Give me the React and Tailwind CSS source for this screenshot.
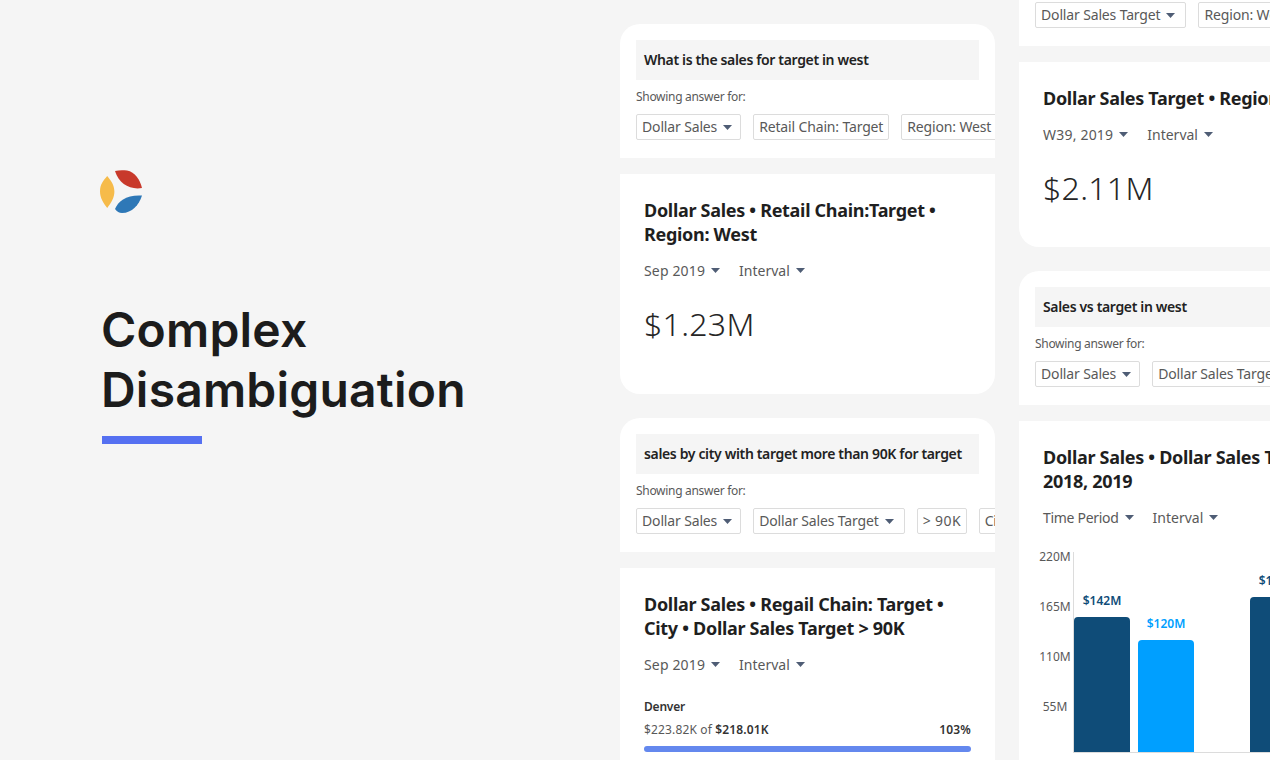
const Caret = ({ className = "ml-[6px]" }) => (
  <svg width="9" height="5" viewBox="0 0 9 5" className={`${className} shrink-0`}>
    <path d="M0 0H9L4.5 5Z" fill="#4f5d75" />
  </svg>
);

const Chip = ({ children, caret, className = "" }) => (
  <div className={`flex h-[26px] shrink-0 items-center rounded-[2px] border border-[#dcdcdc] bg-white px-[5px] text-[14px] leading-none tracking-[-0.15px] whitespace-nowrap text-[#595959] ${className}`}>
    {children}
    {caret && <Caret className="ml-[6px] mr-[3px]" />}
  </div>
);

const Question = ({ text, chips }) => (
  <section className="h-[134px] shrink-0 rounded-t-[20px] bg-white pt-4 pl-4 overflow-hidden">
    <div className="mr-4 flex h-10 items-center bg-[#f5f5f5] px-2 pb-[2px] text-[14px] font-semibold tracking-[-0.35px] whitespace-nowrap text-[#222]">{text}</div>
    <p className="mt-[10px] text-[12px] leading-[14px] tracking-[-0.3px] text-[#595959]">Showing answer for:</p>
    <div className="mt-[10px] flex gap-3">
      {chips.map(([label, caret, cls]) => (
        <Chip key={label} caret={caret} className={cls}>{label}</Chip>
      ))}
    </div>
  </section>
);

const Title = ({ lines }) => (
  <h2 className="text-[18px] leading-6 font-bold tracking-[-0.3px] text-[#1f1f1f]">
    {lines.map((l) => (
      <div key={l} className="whitespace-nowrap">{l}</div>
    ))}
  </h2>
);

const Filters = ({ items }) => (
  <div className="mt-[14px] flex h-5 items-center gap-[19px] text-[14px] text-[#595959]">
    {items.map(([t, cls]) => (
      <div key={t} className="flex items-center whitespace-nowrap">
        <span className={cls}>{t}</span>
        <Caret />
      </div>
    ))}
  </div>
);

const Metric = ({ value }) => (
  <p className="mt-[24px] text-[32px] leading-10 font-light tracking-[0.3px] text-[#262626]">{value}</p>
);

const Answer = ({ children, className }) => (
  <section className={`mt-4 shrink-0 rounded-b-[20px] bg-white px-6 pt-6 ${className}`}>{children}</section>
);

const Bar = ({ label, color, h, text }) => (
  <div className="relative w-14 shrink-0 rounded-t-[4px]" style={{ height: h, background: color }}>
    <span className={`absolute -top-[24px] left-0 w-full text-center text-[12px] leading-4 font-semibold ${text}`}>{label}</span>
  </div>
);

const Logo = () => (
  <svg width="44" height="44" viewBox="0 0 44 44" className="-ml-[1px] block">
    <path d="M7.2 6C3.4 10.5 0 14 0 21.5C0 28 3.4 33 7.2 38C11 33 14.4 28 14.4 21.5C14.4 15 11 10.5 7.2 6Z" fill="#f6bb4a" />
    <path d="M15 1C19 0 23 0 27 0.5C35 2 40 10 42 18C30 20 19 14 15 1Z" fill="#c8392b" />
    <path d="M42 25.5C39 35 32 43 22 43C19 43 17 41.5 15 39C18 31 27 24.5 42 25.5Z" fill="#2e78b7" />
  </svg>
);

export default function App() {
  return (
    <div
      className="flex h-[760px] w-[1270px] overflow-hidden bg-[#f5f5f5] text-[#222]"
      style={{ fontFamily: '"Noto Sans", Arial, sans-serif' }}
    >
      <aside className="w-[620px] shrink-0 pt-[170px] pl-[101px]">
        <Logo />
        <h1 className="mt-[86px] text-[48px] leading-[60px] font-semibold tracking-[0.2px] text-[#1c1c1c]" style={{ fontFamily: 'Inter, sans-serif' }}>
          Complex
          <br />
          Disambiguation
        </h1>
        <div className="mt-[16px] ml-px h-2 w-[100px] bg-[#5570f1]" />
      </aside>

      <main className="flex w-[375px] shrink-0 flex-col pt-6">
        <Question
          text="What is the sales for target in west"
          chips={[["Dollar Sales", true], ["Retail Chain: Target"], ["Region: West"]]}
        />
        <Answer className="h-[220px]">
          <Title lines={["Dollar Sales • Retail Chain:Target •", "Region: West"]} />
          <Filters items={[["Sep 2019", "tracking-[0.15px]"], ["Interval"]]} />
          <Metric value="$1.23M" />
        </Answer>
        <div className="h-6 shrink-0" />
        <Question
          text="sales by city with target more than 90K for target"
          chips={[["Dollar Sales", true], ["Dollar Sales Target", true, "pr-[7px]"], ["> 90K", false, "w-[50px] tracking-[0.4px]"], ["City"]]}
        />
        <Answer className="h-[220px]">
          <Title lines={["Dollar Sales • Regail Chain: Target •", "City • Dollar Sales Target > 90K"]} />
          <Filters items={[["Sep 2019", "tracking-[0.15px]"], ["Interval"]]} />
          <p className="mt-[25px] text-[12px] leading-4 font-semibold tracking-[-0.2px] text-[#333]">Denver</p>
          <div className="mt-[7px] flex justify-between text-[12px] leading-4 tracking-[0.15px] text-[#595959]">
            <span>
              $223.82K of <b className="font-semibold text-[#333]">$218.01K</b>
            </span>
            <b className="font-semibold text-[#333]">103%</b>
          </div>
          <div className="mt-[8px] h-[6px] rounded-full bg-[#6488ee]" />
        </Answer>
      </main>

      <main className="ml-6 flex w-[375px] shrink-0 flex-col -mt-[88px]">
        <Question
          text="Target sales in west"
          chips={[["Dollar Sales Target", true, "pr-[7px]"], ["Region: West"]]}
        />
        <Answer className="h-[185px]">
          <Title lines={["Dollar Sales Target • Region: West"]} />
          <Filters items={[["W39, 2019", "tracking-[0.2px]"], ["Interval"]]} />
          <Metric value="$2.11M" />
        </Answer>
        <div className="h-6 shrink-0" />
        <Question
          text="Sales vs target in west"
          chips={[["Dollar Sales", true], ["Dollar Sales Target", true, "pr-[7px]"]]}
        />
        <Answer className="h-[420px]">
          <Title lines={["Dollar Sales • Dollar Sales Target •", "2018, 2019"]} />
          <Filters items={[["Time Period", "tracking-[-0.3px]"], ["Interval"]]} />
          <div className="mt-[25px] -ml-1 flex">
            <div className="w-8 shrink-0 text-center text-[12px] leading-4 text-[#595959]">
              <div className="flex h-[200px] flex-col gap-[34px] -mt-[3px]">
                <span>220M</span>
                <span>165M</span>
                <span>110M</span>
                <span>55M</span>
              </div>
            </div>
            <div className="ml-[2px] flex h-[201px] items-end gap-2 border-b border-l border-[#dcdcdc]">
              <Bar label="$142M" color="#0f4c78" h={135} text="text-[#0f4c78]" />
              <Bar label="$120M" color="#009fff" h={112} text="text-[#009fff]" />
              <div className="w-10" />
              <Bar label="$155M" color="#0f4c78" h={155} text="text-[#0f4c78]" />
            </div>
          </div>
        </Answer>
      </main>
    </div>
  );
}
